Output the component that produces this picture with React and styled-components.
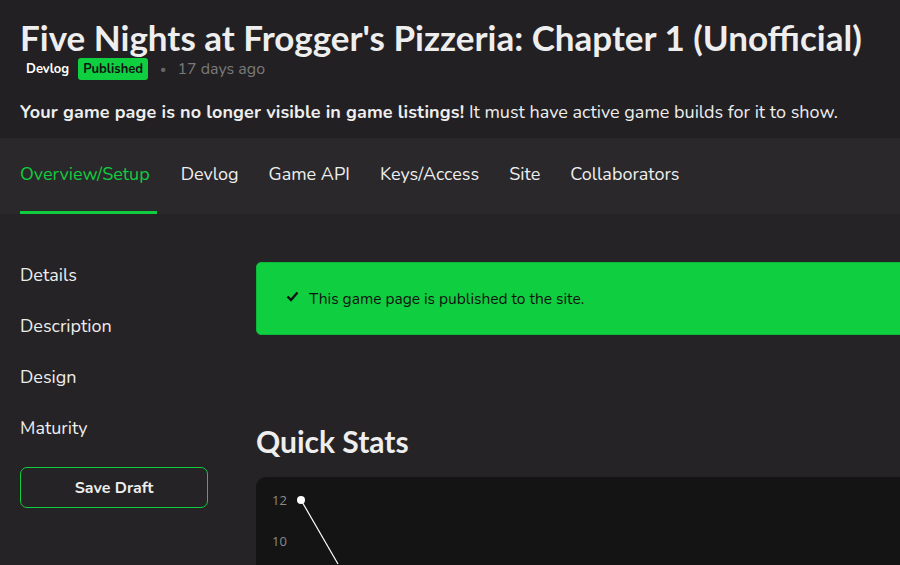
import styled, { createGlobalStyle } from "styled-components";

const GlobalStyle = createGlobalStyle`
  html, body {
    margin: 0;
    padding: 0;
    background: #252325;
    overflow: hidden;
  }
  body {
    font-family: "Nunito", Lato, "Noto Sans", sans-serif;
    color: #eeeeee;
  }
`;

const tabs = ["Overview/Setup", "Devlog", "Game API", "Keys/Access", "Site", "Collaborators"];
const sideLinks = ["Details", "Description", "Design", "Maturity"];

export default function App() {
  return (
    <Page>
      <GlobalStyle />
      <Header>
        <Title>Five Nights at Frogger's Pizzeria: Chapter 1 (Unofficial)</Title>
        <MetaRow>
          <DevlogLink>Devlog</DevlogLink>
          <Badge>Published</Badge>
          <Dot>•</Dot>
          <When>17 days ago</When>
        </MetaRow>
        <Warning>
          <strong>Your game page is no longer visible in game listings!</strong> It must have active game builds for it to show.
        </Warning>
      </Header>

      <NavBar>
        {tabs.map((t, i) => (
          <Tab key={t} $active={i === 0}>{t}</Tab>
        ))}
      </NavBar>

      <Body>
        <Sidebar>
          {sideLinks.map((l) => (
            <SideLink key={l}>{l}</SideLink>
          ))}
          <SaveButton>Save Draft</SaveButton>
        </Sidebar>

        <Main>
          <Notice>
            <svg width="13" height="11" viewBox="0 0 13 11">
              <polyline points="1.5,5.5 5,9 11.5,1.5" fill="none" stroke="#111" strokeWidth="2.4" />
            </svg>
            <span>This game page is published to the site.</span>
          </Notice>

          <SectionTitle>Quick Stats</SectionTitle>

          <Chart>
            <AxisLabels>
              <AxisLabel>12</AxisLabel>
              <AxisLabel>10</AxisLabel>
            </AxisLabels>
            <ChartSvg width="600" height="100" viewBox="0 0 600 100">
              <line x1="45" y1="23" x2="82" y2="87" stroke="#fff" strokeWidth="1.2" />
              <circle cx="45" cy="23" r="4" fill="#fff" />
            </ChartSvg>
          </Chart>
        </Main>
      </Body>
    </Page>
  );
}

const Page = styled.div`
  width: 900px;
  height: 565px;
  overflow: hidden;
`;

const Header = styled.header`
  background: #222023;
  padding: 17px 20px 14px;
`;

const Title = styled.h1`
  margin: 0;
  font-family: Lato, "Noto Sans", sans-serif;
  font-weight: 700;
  font-size: 35px;
  line-height: 40px;
  color: #eeeeee;
  white-space: nowrap;
`;

const MetaRow = styled.div`
  display: flex;
  align-items: center;
  height: 22px;
  margin-top: 1px;
  padding-left: 6px;
`;

const DevlogLink = styled.span`
  font-weight: 700;
  font-size: 13px;
  color: #ffffff;
  margin-right: 9px;
`;

const Badge = styled.span`
  background: #0fcf41;
  color: #111;
  font-weight: 700;
  font-size: 13px;
  border-radius: 3px;
  padding: 2px 5px;
  line-height: 18px;
`;

const Dot = styled.span`
  color: #666;
  font-size: 12px;
  margin: 0 11px 0 12px;
`;

const When = styled.span`
  color: #7a7a7a;
  font-size: 16px;
`;

const Warning = styled.p`
  margin: 20px 0 0;
  font-size: 18px;
  line-height: 24px;
  color: #eeeeee;
  white-space: nowrap;

  strong {
    font-weight: 700;
    letter-spacing: 0.12px;
  }
`;

const NavBar = styled.nav`
  display: flex;
  gap: 30px;
  background: #2a282b;
  padding: 0 20px;
  height: 76px;
`;

const Tab = styled.div`
  display: flex;
  align-items: center;
  font-size: 18px;
  padding-bottom: 1px;
  color: ${(p) => (p.$active ? "#10cc3f" : "#eeeeee")};
  border-bottom: 3px solid ${(p) => (p.$active ? "#10cc3f" : "transparent")};
  box-sizing: border-box;
  padding-right: ${(p) => (p.$active ? "7px" : "0")};
  margin-right: ${(p) => (p.$active ? "-6px" : "0")};
`;

const Body = styled.div`
  display: flex;
  gap: 48px;
  padding: 48px 20px 0;
`;

const Sidebar = styled.aside`
  width: 188px;
  flex-shrink: 0;
  display: flex;
  flex-direction: column;
  gap: 25px;
`;

const SideLink = styled.div`
  font-size: 18px;
  line-height: 26px;
  color: #eeeeee;
`;

const SaveButton = styled.button`
  margin-top: 1px;
  height: 41px;
  background: transparent;
  border: 1px solid #10cc3f;
  border-radius: 7px;
  color: #eeeeee;
  font-family: inherit;
  font-weight: 700;
  font-size: 16px;
  cursor: pointer;
`;

const Main = styled.main`
  width: 720px;
  flex-shrink: 0;
`;

const Notice = styled.div`
  display: flex;
  align-items: center;
  gap: 10px;
  height: 73px;
  box-sizing: border-box;
  padding: 0 29px;
  background: #0fcf41;
  border: 1px solid #0cb838;
  border-radius: 5px;
  color: #111111;
  font-size: 15.5px;

  svg {
    margin-top: -4px;
  }
`;

const SectionTitle = styled.h2`
  margin: 89px 0 0;
  font-family: Lato, "Noto Sans", sans-serif;
  font-weight: 700;
  font-size: 30px;
  line-height: 34px;
  color: #eeeeee;
`;

const Chart = styled.div`
  position: relative;
  margin-top: 19px;
  height: 120px;
  background: #141414;
  border-radius: 10px 0 0 0;
  padding: 14px 16px;
`;

const AxisLabels = styled.div`
  display: flex;
  flex-direction: column;
  gap: 23px;
`;

const AxisLabel = styled.span`
  font-family: "Open Sans", sans-serif;
  font-size: 13px;
  line-height: 18px;
  color: #8a8a8a;
`;

const ChartSvg = styled.svg`
  position: absolute;
  left: 0;
  top: 0;
`;
